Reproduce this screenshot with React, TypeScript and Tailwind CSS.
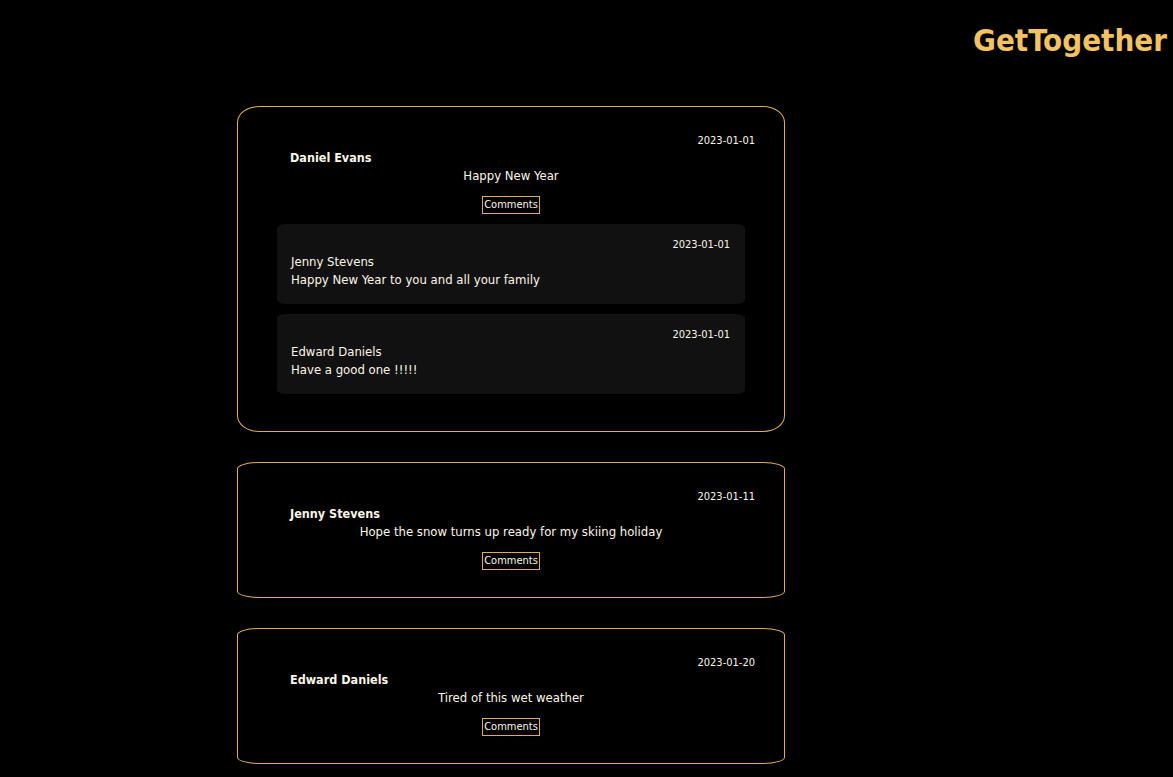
import React from "react";

type Comment = { name: string; date: string; text: string };
type Post = { name: string; date: string; text: string; comments: Comment[] };

const posts: Post[] = [
  {
    name: "Daniel Evans",
    date: "2023-01-01",
    text: "Happy New Year",
    comments: [
      { name: "Jenny Stevens", date: "2023-01-01", text: "Happy New Year to you and all your family" },
      { name: "Edward Daniels", date: "2023-01-01", text: "Have a good one !!!!!" },
    ],
  },
  {
    name: "Jenny Stevens",
    date: "2023-01-11",
    text: "Hope the snow turns up ready for my skiing holiday",
    comments: [],
  },
  {
    name: "Edward Daniels",
    date: "2023-01-20",
    text: "Tired of this wet weather",
    comments: [],
  },
];

const font = { fontFamily: '"DejaVu Sans Condensed", "DejaVu Sans", sans-serif' };

export default function App() {
  return (
    <div className="min-h-screen bg-black text-[#fdf7e8]" style={font}>
      <header className="flex justify-end pr-[6px] pt-[21px]">
        <h1 className="text-[31px] font-bold leading-[38px] text-[#f3c262]">GetTogether</h1>
      </header>
      <main className="ml-[237px] mt-[47px] flex w-[548px] flex-col gap-[30px] pb-[12px]">
        {posts.map((p) => (
          <div
            key={p.name + p.date}
            className="flex flex-col rounded-[4%/5%] border border-[#e0ad52] pb-[27px] pt-[26px]"
          >
            <div className="pr-[29px] text-right text-[11px] leading-[16px]">{p.date}</div>
            <div className="pl-[52px] text-[12.5px] font-bold leading-[17px]">{p.name}</div>
            <div className="mt-[1px] text-center text-[13px] leading-[17px]">{p.text}</div>
            <div className={`mt-[12px] flex flex-col gap-[10px] ${p.comments.length ? "pb-[10px]" : ""}`}>
              <div className="flex justify-center">
                <button className="border border-[#e0ad52] px-[1px] text-[11px] leading-[16px] text-[#fdf7e8]">
                  Comments
                </button>
              </div>
              {p.comments.map((c) => (
                <div
                  key={c.name}
                  className="mx-[39px] rounded-[2%/5%] bg-[#111111] pb-[15px] pl-[14px] pr-[15px] pt-[13px]"
                >
                  <div className="text-right text-[11px] leading-[16px]">{c.date}</div>
                  <div className="text-[13px] leading-[18px]">{c.name}</div>
                  <div className="text-[13px] leading-[18px]">{c.text}</div>
                </div>
              ))}
            </div>
          </div>
        ))}
      </main>
    </div>
  );
}
